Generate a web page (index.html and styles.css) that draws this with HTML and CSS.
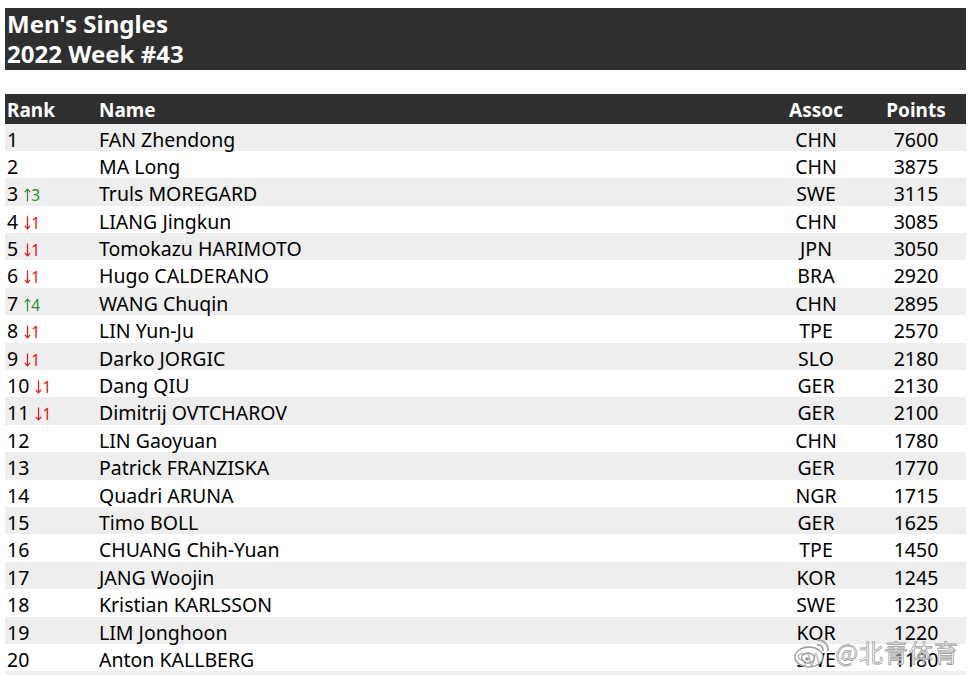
FILE: index.html
```html
<!DOCTYPE html>
<html>
<head>
<meta charset="utf-8">
<link rel="stylesheet" href="styles.css">
</head>
<body>
<div class="page">
  <div class="title">
    <div>Men's Singles</div>
    <div>2022 Week #43</div>
  </div>
  <div class="table">
    <div class="row head"><div>Rank</div><div>Name</div><div class="ctr">Assoc</div><div class="ctr">Points</div></div>
    <div class="row"><div>1</div><div>FAN Zhendong</div><div class="ctr">CHN</div><div class="ctr">7600</div></div>
    <div class="row"><div>2</div><div>MA Long</div><div class="ctr">CHN</div><div class="ctr">3875</div></div>
    <div class="row"><div>3 <span class="up"><svg class="arr" width="7" height="14" viewBox="0 0 7 14"><path d="M3.5 13.5V1.2M0.8 4.2L3.5 1.2L6.2 4.2" fill="none" stroke="currentColor" stroke-width="1.2"/></svg>3</span></div><div>Truls MOREGARD</div><div class="ctr">SWE</div><div class="ctr">3115</div></div>
    <div class="row"><div>4 <span class="down"><svg class="arr" width="7" height="14" viewBox="0 0 7 14"><path d="M3.5 0.5V12.8M0.8 9.8L3.5 12.8L6.2 9.8" fill="none" stroke="currentColor" stroke-width="1.2"/></svg>1</span></div><div>LIANG Jingkun</div><div class="ctr">CHN</div><div class="ctr">3085</div></div>
    <div class="row"><div>5 <span class="down"><svg class="arr" width="7" height="14" viewBox="0 0 7 14"><path d="M3.5 0.5V12.8M0.8 9.8L3.5 12.8L6.2 9.8" fill="none" stroke="currentColor" stroke-width="1.2"/></svg>1</span></div><div>Tomokazu HARIMOTO</div><div class="ctr">JPN</div><div class="ctr">3050</div></div>
    <div class="row"><div>6 <span class="down"><svg class="arr" width="7" height="14" viewBox="0 0 7 14"><path d="M3.5 0.5V12.8M0.8 9.8L3.5 12.8L6.2 9.8" fill="none" stroke="currentColor" stroke-width="1.2"/></svg>1</span></div><div>Hugo CALDERANO</div><div class="ctr">BRA</div><div class="ctr">2920</div></div>
    <div class="row"><div>7 <span class="up"><svg class="arr" width="7" height="14" viewBox="0 0 7 14"><path d="M3.5 13.5V1.2M0.8 4.2L3.5 1.2L6.2 4.2" fill="none" stroke="currentColor" stroke-width="1.2"/></svg>4</span></div><div>WANG Chuqin</div><div class="ctr">CHN</div><div class="ctr">2895</div></div>
    <div class="row"><div>8 <span class="down"><svg class="arr" width="7" height="14" viewBox="0 0 7 14"><path d="M3.5 0.5V12.8M0.8 9.8L3.5 12.8L6.2 9.8" fill="none" stroke="currentColor" stroke-width="1.2"/></svg>1</span></div><div>LIN Yun-Ju</div><div class="ctr">TPE</div><div class="ctr">2570</div></div>
    <div class="row"><div>9 <span class="down"><svg class="arr" width="7" height="14" viewBox="0 0 7 14"><path d="M3.5 0.5V12.8M0.8 9.8L3.5 12.8L6.2 9.8" fill="none" stroke="currentColor" stroke-width="1.2"/></svg>1</span></div><div>Darko JORGIC</div><div class="ctr">SLO</div><div class="ctr">2180</div></div>
    <div class="row"><div>10 <span class="down"><svg class="arr" width="7" height="14" viewBox="0 0 7 14"><path d="M3.5 0.5V12.8M0.8 9.8L3.5 12.8L6.2 9.8" fill="none" stroke="currentColor" stroke-width="1.2"/></svg>1</span></div><div>Dang QIU</div><div class="ctr">GER</div><div class="ctr">2130</div></div>
    <div class="row"><div>11 <span class="down"><svg class="arr" width="7" height="14" viewBox="0 0 7 14"><path d="M3.5 0.5V12.8M0.8 9.8L3.5 12.8L6.2 9.8" fill="none" stroke="currentColor" stroke-width="1.2"/></svg>1</span></div><div>Dimitrij OVTCHAROV</div><div class="ctr">GER</div><div class="ctr">2100</div></div>
    <div class="row"><div>12</div><div>LIN Gaoyuan</div><div class="ctr">CHN</div><div class="ctr">1780</div></div>
    <div class="row"><div>13</div><div>Patrick FRANZISKA</div><div class="ctr">GER</div><div class="ctr">1770</div></div>
    <div class="row"><div>14</div><div>Quadri ARUNA</div><div class="ctr">NGR</div><div class="ctr">1715</div></div>
    <div class="row"><div>15</div><div>Timo BOLL</div><div class="ctr">GER</div><div class="ctr">1625</div></div>
    <div class="row"><div>16</div><div>CHUANG Chih-Yuan</div><div class="ctr">TPE</div><div class="ctr">1450</div></div>
    <div class="row"><div>17</div><div>JANG Woojin</div><div class="ctr">KOR</div><div class="ctr">1245</div></div>
    <div class="row"><div>18</div><div>Kristian KARLSSON</div><div class="ctr">SWE</div><div class="ctr">1230</div></div>
    <div class="row"><div>19</div><div>LIM Jonghoon</div><div class="ctr">KOR</div><div class="ctr">1220</div></div>
    <div class="row"><div>20</div><div>Anton KALLBERG</div><div class="ctr">SWE</div><div class="ctr">1180</div></div>
    <div class="row"><div></div><div></div><div></div><div></div></div>
  </div>
  <div class="wm">
    <svg class="wm-logo" width="40" height="34" viewBox="0 0 40 34">
      <ellipse cx="16" cy="22" rx="14" ry="10" fill="rgba(255,255,255,0.75)" stroke="#9a9a9a" stroke-width="1.3"/>
      <ellipse cx="15" cy="23" rx="6.5" ry="5" fill="none" stroke="#9a9a9a" stroke-width="1.3"/>
      <circle cx="14" cy="24" r="1.8" fill="#9a9a9a"/>
      <path d="M24 5 a10 10 0 0 1 11 11" fill="none" stroke="#a5a5a5" stroke-width="1.8"/>
      <path d="M24 10 a5 5 0 0 1 6 6" fill="none" stroke="#a5a5a5" stroke-width="1.8"/>
    </svg>
    <span class="wm-text">@北青体育</span>
  </div>
</div>
</body>
</html>
```

FILE: styles.css
```css
html, body {
  margin: 0;
  padding: 0;
  background: #ffffff;
}
.page {
  position: relative;
  width: 968px;
  height: 675px;
  overflow: hidden;
  padding: 8px 2px 0 5px;
  box-sizing: border-box;
  font-family: "Noto Sans", "Open Sans", sans-serif;
  color: #000;
}
.title {
  background: #2f2f2f;
  color: #fff;
  font-weight: 700;
  font-size: 24px;
  line-height: 30px;
  padding: 1px 0 1px 2px;
  height: 62px;
  box-sizing: border-box;
}
.table {
  margin-top: 24px;
  width: 961px;
}
.row {
  display: grid;
  grid-template-columns: 94px 1fr 100px 100px;
  height: 27.4px;
  align-items: center;
  font-size: 19.5px;
  white-space: nowrap;
}
.row > div:first-child { padding-left: 2px; }
.row > .ctr { text-align: center; }
.row.head {
  height: 29.5px;
  background: #2f2f2f;
  color: #fff;
  font-weight: 700;
  font-size: 19px;
}
.row:nth-child(even) { background: #eeeeee; }
.row > div { padding-top: 2px; }
.up, .down {
  font-family: "Noto Sans", sans-serif;
  font-size: 15.5px;
  margin-left: 1px;
}
.arr {
  vertical-align: -1px;
  margin-right: 0;
}
.up { color: #2e8b2e; }
.down { color: #ee1111; }
.wm {
  position: absolute;
  right: 9px;
  bottom: 6px;
  display: flex;
  align-items: center;
  gap: 2px;
}
.wm-text {
  font-family: "Noto Sans CJK SC", sans-serif;
  font-size: 24px;
  color: rgba(255,255,255,0.7);
  -webkit-text-stroke: 0.8px #a0a0a0;
  letter-spacing: 1px;
}
```
